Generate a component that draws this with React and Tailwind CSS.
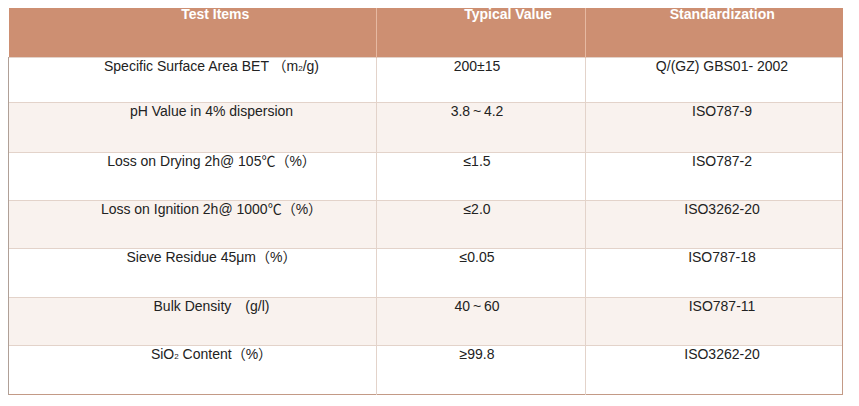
import React from 'react';

const ROWS = [
  { h: 'h-[45px]', cells: [<>Specific Surface Area BET （m<span className="text-[8px]">2</span>/g)</>, '200±15', 'Q/(GZ) GBS01- 2002'] },
  { h: 'h-[50px]', cells: ['pH Value in 4% dispersion', '3.8\u2009~\u20094.2', 'ISO787-9'] },
  { h: 'h-[48px]', cells: ['Loss on Drying 2h@ 105℃（%）', '≤1.5', 'ISO787-2'] },
  { h: 'h-[48px]', cells: ['Loss on Ignition 2h@ 1000℃（%）', '≤2.0', 'ISO3262-20'] },
  { h: 'h-[49px]', cells: ['Sieve Residue 45μm（%）', '≤0.05', 'ISO787-18'] },
  { h: 'h-[48px]', cells: ['Bulk Density　(g/l)', '40\u2009~\u200960', 'ISO787-11'] },
  { h: 'h-[49px]', cells: [<>SiO<span className="text-[8px]">2</span> Content（%）</>, '≥99.8', 'ISO3262-20'] },
];

export default function App() {
  return (
    <div className="w-[859px] h-[406px] bg-white pt-2 pl-2 font-['Liberation_Sans','Noto_Sans_CJK_SC',sans-serif]">
      <table className="w-[834px] border-collapse table-fixed text-[14px] text-[#222]">
        <colgroup>
          <col className="w-[368px]" />
          <col className="w-[209px]" />
          <col className="w-[257px]" />
        </colgroup>
        <thead>
          <tr className="h-[49px] bg-[#cd8f72] text-white font-bold align-top leading-[12px]">
            <th className="pl-[46px] pt-0 border-r border-[#e6b9a2]">Test Items</th>
            <th className="pl-[54px] pt-0 border-r border-[#e6b9a2]">Typical Value</th>
            <th className="pl-[16px] pt-0">Standardization</th>
          </tr>
        </thead>
        <tbody>
          {ROWS.map((row, i) => (
            <tr
              key={i}
              className={`${row.h} align-top leading-4 text-center border-t border-[#e3d3ca] ${i % 2 ? 'bg-[#f9f2ee]' : 'bg-white'} ${i === ROWS.length - 1 ? 'border-b border-b-[#c39a86]' : ''}`}
            >
              <td className="pl-[38px] border-l border-l-[#b0a097] border-r border-r-[#e3d3ca]">{row.cells[0]}</td>
              <td className="pr-[8px] border-r border-r-[#e3d3ca]">{row.cells[1]}</td>
              <td className="pl-[16px] border-r border-r-[#c39a86]">{row.cells[2]}</td>
            </tr>
          ))}
        </tbody>
      </table>
    </div>
  );
}
